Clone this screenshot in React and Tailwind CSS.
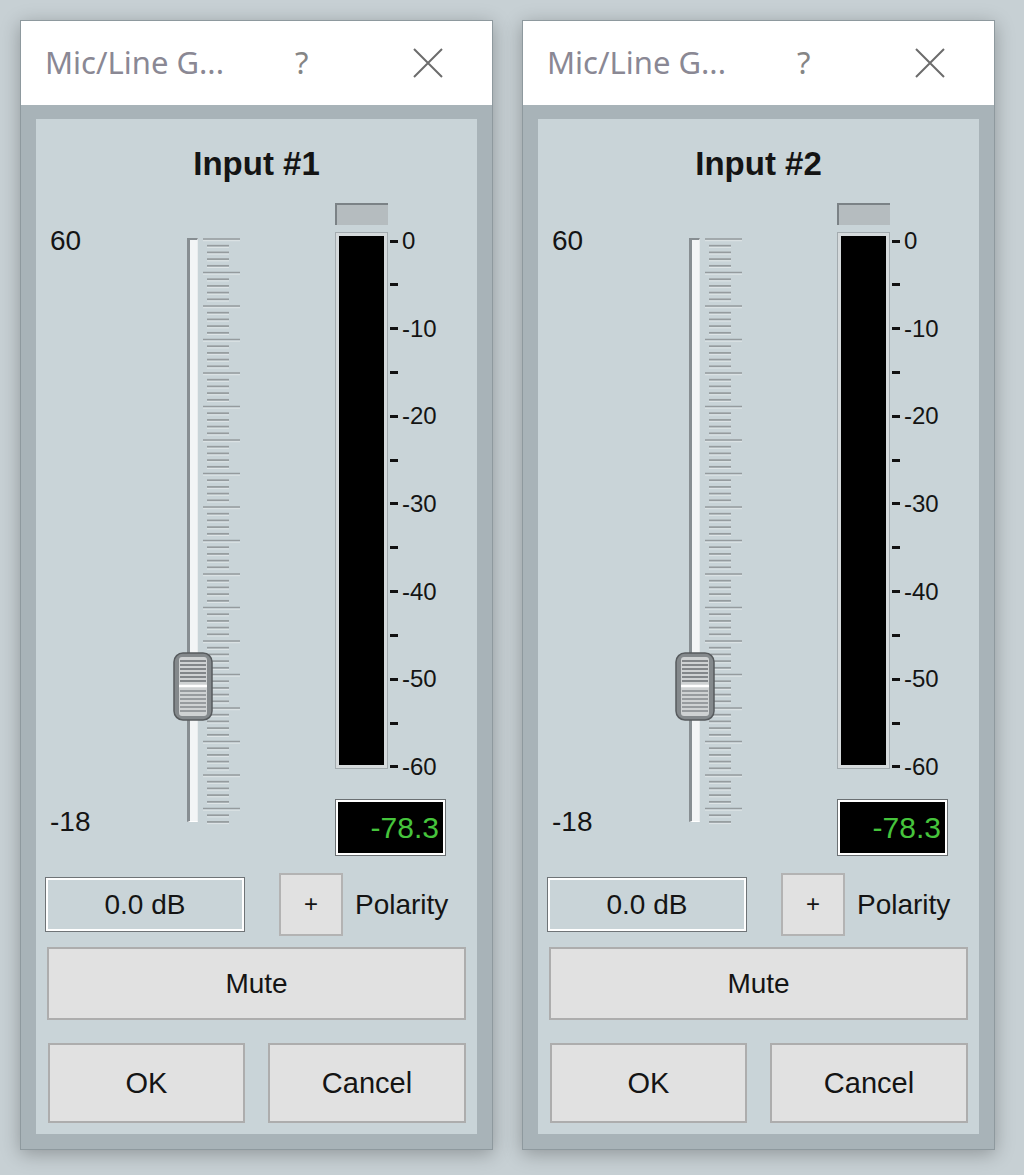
const scaleLabels = ['0', '', '-10', '', '-20', '', '-30', '', '-40', '', '-50', '', '-60'];

const Ticks = () => {
    const ticks = [];
    for (let i = 0; i < 88; i++) {
        const y = 1 + i * 6.7;
        const long = i % 5 === 0;
        ticks.push(
            <g key={i}>
                <line x1={long ? 0 : 4} x2={long ? 37 : 26} y1={y} y2={y} stroke="#959b9e" strokeWidth="1.7" />
                <line x1={long ? 0 : 4} x2={long ? 37 : 26} y1={y + 1.7} y2={y + 1.7} stroke="#dfe5e7" strokeWidth="1" />
            </g>
        );
    }
    return (
        <svg width="38" height="590" viewBox="0 0 38 590">
            {ticks}
        </svg>
    );
};

const Knob = () => (
    <svg width="40" height="69" viewBox="0 0 40 69">
        <rect x="1" y="1" width="38" height="67" rx="9" fill="#84898c" stroke="#575b5e" strokeWidth="1.5" />
        <rect x="6" y="5" width="28" height="59" rx="3" fill="#cfd2d3" />
        {[9, 13, 17, 21, 25, 29].map((y) => (
            <line key={y} x1="7" x2="33" y1={y} y2={y} stroke="#6f7477" strokeWidth="1.6" />
        ))}
        <line x1="6" x2="34" y1="34" y2="34" stroke="#ffffff" strokeWidth="2.5" />
        {[39, 43, 47, 51, 55, 59].map((y) => (
            <line key={y} x1="7" x2="33" y1={y} y2={y} stroke="#7f8487" strokeWidth="1.4" />
        ))}
    </svg>
);

const GainDialog = ({ n }) => {
    return (
        <div className="w-[473px] h-[1130px] flex flex-col border border-[#8e999e] bg-[#a8b3b8] shadow-[0_4px_18px_rgba(0,0,0,0.28)]">
            {/* title bar */}
            <div className="h-[85px] bg-white flex items-center pl-[24px] font-['Noto_Sans',sans-serif] text-[31px]">
                <div className="w-[250px] text-[#8a8894] leading-none pb-[2px]">Mic/Line G...</div>
                <div className="w-[118px] text-[#858585] leading-none pb-[2px]">?</div>
                <svg width="30" height="30" viewBox="0 0 30 30">
                    <path d="M1 1 L29 29 M29 1 L1 29" stroke="#6c6c6c" strokeWidth="2" fill="none" />
                </svg>
            </div>

            <div className="flex-1 px-[15px] pt-[14px] pb-[15px]">
                <div className="h-[1015px] bg-[#c9d4d8] flex flex-col font-['Liberation_Sans',Arial,sans-serif] text-[#141414]">
                    <div className="h-[84px] pt-[28px] text-center font-bold text-[33px] leading-[34px]">Input #{n}</div>

                    <div className="flex pl-[14px]">
                        {/* gain labels */}
                        <div className="w-[123px] flex flex-col pt-[22px] text-[28px] leading-[32px]">
                            <div className="h-[32px]">60</div>
                            <div className="h-[32px] mt-[549px]">-18</div>
                        </div>

                        {/* fader */}
                        <div className="relative w-[70px] flex items-start pt-[35px]">
                            <div className="ml-[14px] h-[584px] w-[11px] border-l-[3px] border-t-[2px] border-[#878e92] border-r border-r-[#e9eced] border-b border-b-[#ffffff] bg-[#f3f5f6]" />
                            <div className="ml-[5px]">
                                <Ticks />
                            </div>
                            <div className="absolute left-0 top-[449px]">
                                <Knob />
                            </div>
                        </div>

                        {/* meter */}
                        <div className="ml-[92px] flex flex-col">
                            <div className="w-[53px] h-[22px] bg-[#b5bcbf] border-t-[2px] border-l-[2px] border-[#7b8286]" />
                            <div className="flex items-start h-[537px] mt-[7px]">
                                <div className="w-[53px] h-[537px] border border-[#a3abaf] bg-[#d5dadc] p-[3px]">
                                    <div className="w-full h-full bg-black" />
                                </div>
                                <div className="ml-[2px] -mt-[3px] h-[550px] shrink-0 flex flex-col justify-between">
                                    {scaleLabels.map((l, i) => (
                                        <div key={i} className="h-[24px] flex items-center">
                                            <div className="w-[8px] h-[3px] bg-[#111]" />
                                            {l && <span className="ml-[4px] text-[24px] leading-[24px]">{l}</span>}
                                        </div>
                                    ))}
                                </div>
                            </div>
                            <div className="mt-[30px] w-[111px] h-[57px] border border-[#6b7073] bg-white p-[2px]">
                                <div className="w-full h-full bg-black flex items-center justify-end pr-[4px] text-[#46c43c] text-[30px] leading-none">
                                    -78.3
                                </div>
                            </div>
                        </div>
                    </div>

                    {/* gain value + polarity */}
                    <div className="flex items-center pl-[9px] mt-[17px]">
                        <div className="w-[200px] h-[55px] border border-[#6f7477] p-[2px] bg-white">
                            <div className="w-full h-full bg-[#c9d4d8] flex items-center justify-center text-[28px] leading-none">0.0 dB</div>
                        </div>
                        <div className="ml-[34px] w-[64px] h-[63px] bg-[#e1e1e1] border-2 border-[#b3b3b3] flex items-center justify-center text-[24px] leading-none pb-[2px]">+</div>
                        <div className="ml-[12px] text-[28px] leading-none">Polarity</div>
                    </div>

                    <div className="mt-[11px] ml-[11px] w-[419px] h-[73px] bg-[#e1e1e1] border-2 border-[#adadad] flex items-center justify-center text-[28px] leading-none">
                        Mute
                    </div>

                    <div className="mt-[23px] ml-[12px] flex gap-[23px]">
                        <div className="w-[197px] h-[80px] bg-[#e1e1e1] border-2 border-[#adadad] flex items-center justify-center text-[29px] leading-none">OK</div>
                        <div className="w-[198px] h-[80px] bg-[#e1e1e1] border-2 border-[#adadad] flex items-center justify-center text-[29px] leading-none">Cancel</div>
                    </div>
                </div>
            </div>
        </div>
    );
};

const App = () => {
    return (
        <div className="w-[1024px] h-[1175px] bg-[#c7d0d4] flex gap-[29px] pl-[20px] pt-[20px]">
            <GainDialog n={1} />
            <GainDialog n={2} />
        </div>
    );
};

export default App;
